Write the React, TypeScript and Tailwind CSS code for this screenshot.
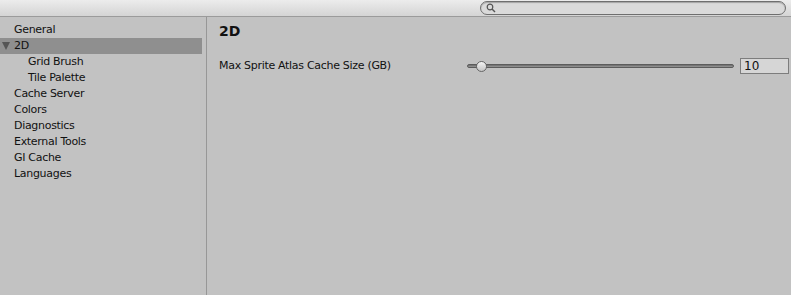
const FONT = "font-['Lucida_Grande','DejaVu_Sans',sans-serif]";

const sections: { label: string; indent?: boolean; selected?: boolean; open?: boolean }[] = [
  { label: "General" },
  { label: "2D", selected: true, open: true },
  { label: "Grid Brush", indent: true },
  { label: "Tile Palette", indent: true },
  { label: "Cache Server" },
  { label: "Colors" },
  { label: "Diagnostics" },
  { label: "External Tools" },
  { label: "GI Cache" },
  { label: "Languages" },
];

function SearchField() {
  return (
    <div className="ml-auto mr-[5px] mt-[1px] flex h-[14px] w-[306px] items-center rounded-full border border-[#6f6f6f] bg-[#dadada] shadow-[inset_0_1px_1px_rgba(0,0,0,0.25)]">
      <svg width="10" height="10" viewBox="0 0 10 10" className="ml-[5px]">
        <circle cx="4" cy="4" r="2.8" fill="none" stroke="#555" strokeWidth="1.2" />
        <line x1="6" y1="6" x2="9" y2="9" stroke="#555" strokeWidth="1.4" />
      </svg>
    </div>
  );
}

// thumb travels inside the track, inset by its width
function Slider({ value, max }: { value: number; max: number }) {
  const frac = value / max;
  return (
    <div className="relative h-[12px] flex-1">
      <div className="absolute left-0 right-0 top-[4px] h-[4px] rounded-full border border-[#5c5c5c] bg-gradient-to-b from-[#6a6a6a] to-[#9a9a9a]" />
      <div
        className="absolute top-[1px] h-[11px] w-[11px] rounded-full border border-[#666] bg-gradient-to-b from-[#f4f4f4] to-[#c4c4c4]"
        style={{ left: `calc(${frac * 100}% - ${frac * 11}px)` }}
      />
    </div>
  );
}

export default function App() {
  return (
    <div className={`flex h-[295px] w-[791px] flex-col bg-[#c2c2c2] text-[11px] tracking-[-0.3px] text-[#111] ${FONT}`}>
      <div className="flex h-[17px] border-b border-[#9b9b9b] bg-gradient-to-b from-[#ececec] to-[#d4d4d4]">
        <SearchField />
      </div>
      <div className="flex flex-1">
        <div className="w-[207px] border-r border-[#979797] pt-[5px]">
          <div className="w-[202px]">
            {sections.map((s) => (
              <div
                key={s.label}
                className={`relative flex h-[16px] items-center ${s.indent ? "pl-[28px]" : "pl-[14px]"} ${
                  s.selected ? "bg-[#8f8f8f]" : ""
                }`}
              >
                {s.open && (
                  <span className="absolute left-[2px] top-[4px] h-0 w-0 border-x-[4.5px] border-t-[8px] border-x-transparent border-t-[#555]" />
                )}
                {s.label}
              </div>
            ))}
          </div>
        </div>
        <div className="flex-1 pl-[12px] pr-[2px] pt-[5px]">
          <div className="h-[18px] text-[14px] font-bold leading-[18px] tracking-normal">2D</div>
          <div className="mt-[18px] flex h-[16px] items-center">
            <span className="w-[248px]">Max Sprite Atlas Cache Size (GB)</span>
            <Slider value={7} max={200} />
            <div className="ml-[6px] flex h-[16px] w-[49px] items-center border border-[#7d7d7d] bg-[#d6d6d6] pl-[3px] text-[12px] tracking-normal">
              10
            </div>
          </div>
        </div>
      </div>
    </div>
  );
}
